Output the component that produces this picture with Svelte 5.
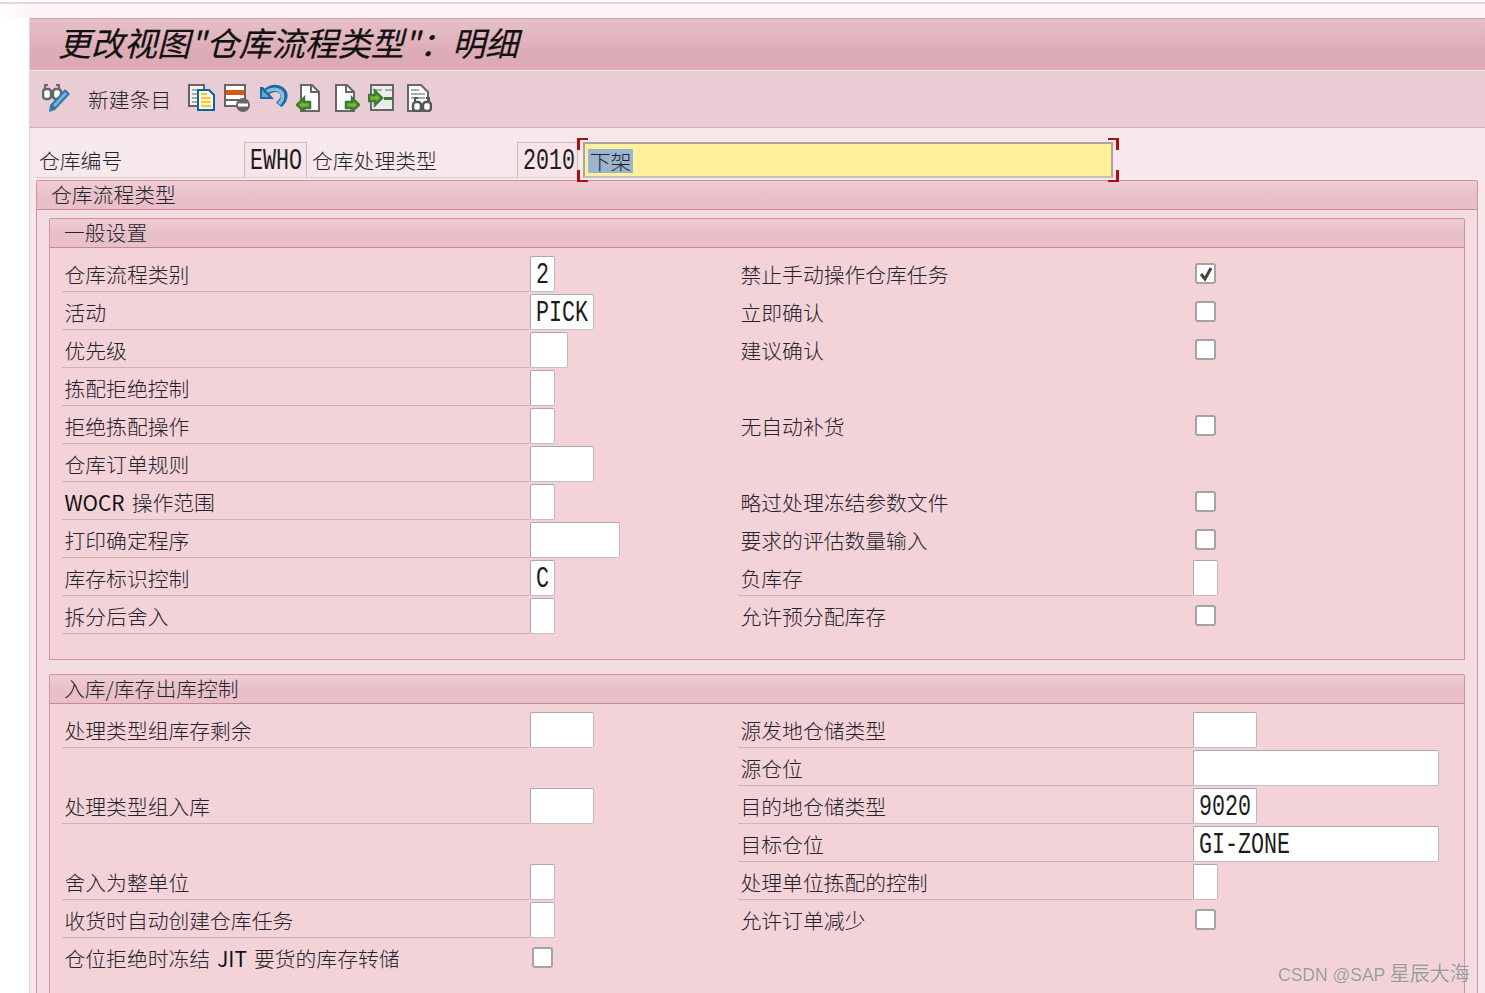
<script>
  // each row: [left, right], a cell is { t: label, w: field width, v: value } or { t, check } 
  const general = [
    [{ t: '仓库流程类别', w: 25, v: '2' }, { t: '禁止手动操作仓库任务', check: true, on: true }],
    [{ t: '活动', w: 64, v: 'PICK' }, { t: '立即确认', check: true }],
    [{ t: '优先级', w: 38 }, { t: '建议确认', check: true }],
    [{ t: '拣配拒绝控制', w: 25 }, null],
    [{ t: '拒绝拣配操作', w: 25 }, { t: '无自动补货', check: true }],
    [{ t: '仓库订单规则', w: 64 }, null],
    [{ t: 'WOCR 操作范围', w: 25 }, { t: '略过处理冻结参数文件', check: true }],
    [{ t: '打印确定程序', w: 90 }, { t: '要求的评估数量输入', check: true }],
    [{ t: '库存标识控制', w: 25, v: 'C' }, { t: '负库存', w: 25 }],
    [{ t: '拆分后舍入', w: 25 }, { t: '允许预分配库存', check: true }]
  ];

  const stock = [
    [{ t: '处理类型组库存剩余', w: 64 }, { t: '源发地仓储类型', w: 64 }],
    [null, { t: '源仓位', w: 246 }],
    [{ t: '处理类型组入库', w: 64 }, { t: '目的地仓储类型', w: 64, v: '9020' }],
    [null, { t: '目标仓位', w: 246, v: 'GI-ZONE' }],
    [{ t: '舍入为整单位', w: 25 }, { t: '处理单位拣配的控制', w: 25 }],
    [{ t: '收货时自动创建仓库任务', w: 25 }, { t: '允许订单减少', check: true }],
    [{ t: '仓位拒绝时冻结 JIT 要货的库存转储', check: true }, null]
  ];

  // latin words come out heavier than the chinese in the reference
  const parts = (text) => text.split(/([A-Z]+)/);
</script>

{#snippet cell(c)}
  <div class="cell">
    {#if c}
      <span class="label" class:plain={c.check}>
        {#each parts(c.t) as part, i}
          {#if i % 2}<span class="latin">{part}</span>{:else}{part}{/if}
        {/each}
      </span>
      {#if c.check}
        <span class="check">
          {#if c.on}
            <svg viewBox="0 0 16 16" width="16" height="16"><path d="M3 8l4 5 6-11" fill="none" stroke="#4d3f40" stroke-width="3" /></svg>
          {/if}
        </span>
      {:else}
        <span class="field" style="width:{c.w}px"><span class="mono">{c.v ?? ''}</span></span>
      {/if}
    {/if}
  </div>
{/snippet}

{#snippet group(title, rows)}
  <section class="group">
    <div class="group-head">{title}</div>
    <div class="rows">
      {#each rows as row}
        <div class="row">
          {@render cell(row[0])}
          {@render cell(row[1])}
        </div>
      {/each}
    </div>
  </section>
{/snippet}

<div class="page">
  <div class="topline"></div>
  <div class="topband"></div>
  <div class="shell">
    <div class="title">更改视图"仓库流程类型"：明细</div>

    <div class="toolbar">
      <svg class="icon" viewBox="0 0 28 28">
        <g fill="#fff" stroke="#666" stroke-width="2.500">
          <rect x="1" y="5" width="8" height="10" rx="3" />
          <rect x="11" y="5" width="8" height="10" rx="3" />
        </g>
        <path d="M3 5V1h3M17 5V1h-3M9 9h2" fill="none" stroke="#666" stroke-width="2" />
        <path d="M23 5l5 5-15 16-6 2 1-7z" fill="#2f78ab" />
        <path d="M23 8l2 2-12 13-2-2z" fill="#7fb2d4" />
      </svg>
      <span class="tool-text">新建条目</span>
      <div class="tools">
        <svg class="icon" viewBox="0 0 28 28">
          <rect x="1" y="1" width="15" height="21" fill="#f3f3f3" stroke="#666" stroke-width="2" />
          <path d="M4 6h9M4 10h6M4 14h6M4 18h6" stroke="#aaa" stroke-width="2" />
          <path d="M10 6h11l5 5v15H10z" fill="#fff" stroke="#0a6496" stroke-width="2" />
          <path d="M13 10h6M13 14h10M13 18h10M13 22h10" stroke="#f5c93c" stroke-width="2.400" />
        </svg>
        <svg class="icon" viewBox="0 0 28 28">
          <rect x="1" y="1" width="20" height="21" fill="#fff" stroke="#666" stroke-width="2" />
          <rect x="2" y="6" width="18" height="5" fill="#d4581a" />
          <path d="M2 16h18" stroke="#666" stroke-width="2" />
          <circle cx="19" cy="21" r="7" fill="#666" />
          <rect x="14" y="19.500" width="10" height="3" fill="#fff" />
        </svg>
        <svg class="icon" viewBox="0 0 28 28">
          <path d="M6 8Q14 2 21 6q5 4 2 10l-4 5" fill="none" stroke="#1a6ca0" stroke-width="7" />
          <path d="M6 8Q14 3 20 7q4 3 2 9l-3 4" fill="none" stroke="#8fbbd9" stroke-width="3.500" />
          <path d="M0 3h3l11 12H0z" fill="#1a6ca0" />
          <path d="M2 6l7 7H2z" fill="#6ea6cc" />
        </svg>
        <svg class="icon" viewBox="0 0 28 28">
          <path d="M5 1h11l7 7v19H5z" fill="#fff" stroke="#666" stroke-width="2" />
          <path d="M15 1v7h8" fill="none" stroke="#666" stroke-width="2" />
          <path d="M1 21l7-7v4h6v6H8v3z" fill="#7ab32d" stroke="#3d7a3a" stroke-width="2.500" />
        </svg>
        <svg class="icon" viewBox="0 0 28 28">
          <path d="M4 1h11l7 7v19H4z" fill="#fff" stroke="#666" stroke-width="2" />
          <path d="M14 1v7h8" fill="none" stroke="#666" stroke-width="2" />
          <path d="M27 21l-7-7v4h-6v6h6v3z" fill="#7ab32d" stroke="#3d7a3a" stroke-width="2.500" />
        </svg>
        <svg class="icon" viewBox="0 0 28 28">
          <rect x="3" y="1" width="22" height="25" fill="#ececec" stroke="#666" stroke-width="2" />
          <path d="M5 6h9M17 6h7" stroke="#aaa" stroke-width="2" />
          <rect x="16" y="13" width="9" height="3" fill="#3d7a3a" />
          <path d="M14 14l-7-7v4H1v6h6v4z" fill="#7ab32d" stroke="#3d7a3a" stroke-width="2.500" />
        </svg>
        <svg class="icon" viewBox="0 0 28 28">
          <path d="M4 1h13l7 7v19H4z" fill="#fff" stroke="#666" stroke-width="2" />
          <path d="M7 6h8M7 10h14M7 14h14" stroke="#aaa" stroke-width="2" />
          <g fill="#fff" stroke="#555" stroke-width="2.500">
            <rect x="9" y="18" width="8" height="9" rx="3" />
            <rect x="19" y="18" width="8" height="9" rx="3" />
          </g>
          <path d="M11 18v-4h3M25 18v-4h-3M17 22h2" fill="none" stroke="#555" stroke-width="2" />
        </svg>
      </div>
    </div>

    <div class="header-zone">
      <span class="hd-label first">仓库编号</span>
      <span class="readonly first-ro"><span class="mono">EWHO</span></span>
      <span class="hd-label second">仓库处理类型</span>
      <span class="readonly second-ro"><span class="mono">2010</span></span>
      <div class="focus">
        <span class="selected">下架</span>
        <i class="corner tl"></i><i class="corner tr"></i><i class="corner bl"></i><i class="corner br"></i>
      </div>
    </div>

    <section class="outer">
      <div class="outer-head">仓库流程类型</div>
      <div class="outer-body">
        {@render group('一般设置', general)}
        {@render group('入库/库存出库控制', stock)}
      </div>
    </section>
  </div>
  <div class="watermark">CSDN @SAP <span class="wm-cjk">星辰大海</span></div>
</div>

<style>
  :global(body) {
    margin: 0;
    background: #fff;
  }

  .page {
    position: relative;
    height: 993px;
    overflow: hidden;
    font-family: "Noto Sans CJK SC", "Liberation Sans", sans-serif;
    font-size: 20.8px;
    font-weight: 300;
    color: #24242c;
    background: #fff;
  }

  .topline {
    height: 2px;
    margin-top: 2px;
    background: #e8d6d9;
  }

  .topband {
    height: 14px;
    background: linear-gradient(90deg, #fff, #fdf4f5 30px);
  }

  .shell {
    margin-left: 29px;
    border-left: 1px solid #e6cfd3;
    background: #f6e8eb;
  }

  .title {
    height: 52px;
    box-sizing: border-box;
    padding-left: 28px;
    line-height: 46px;
    font-size: 33px;
    font-style: italic;
    font-weight: 400;
    color: #111;
    -webkit-text-stroke: 0.2px #111;
    background: linear-gradient(#e7c0c8, #dcabb5 70%);
    border-top: 1px solid #cfa0a9;
  }

  .toolbar {
    display: flex;
    align-items: center;
    height: 57px;
    box-sizing: border-box;
    margin-top: 1px;
    padding: 0 0 3px 12px;
    background: #e9ccd4;
    border-bottom: 1px solid #d2a8b1;
  }

  .icon {
    width: 28px;
    height: 28px;
    flex: none;
  }

  .tool-text {
    width: 82px;
    margin: 2px 18px 0;
    white-space: nowrap;
  }

  .tools {
    display: flex;
    gap: 8px;
  }

  .header-zone {
    display: flex;
    align-items: flex-start;
    height: 52px;
    box-sizing: border-box;
    padding: 14px 0 0 6px;
  }

  .hd-label {
    height: 36px;
    box-sizing: border-box;
    line-height: 37px;
    border-bottom: 1px solid #d8c8cb;
  }

  .hd-label.first {
    width: 208px;
    padding-left: 3px;
  }

  .hd-label.second {
    width: 210px;
    padding-left: 5px;
  }

  .readonly {
    display: flex;
    align-items: center;
    height: 36px;
    box-sizing: border-box;
    padding-left: 5px;
    background: #f7e4e8;
    border: 1px solid #c9bdbf;
    border-bottom-color: #e2d4d6;
  }

  .first-ro {
    width: 63px;
  }

  .second-ro {
    width: 61px;
  }

  .mono {
    display: inline-block;
    margin-top: 3px;
    font-family: "Liberation Mono", monospace;
    font-size: 21.67px;
    font-weight: 400;
    line-height: 30px;
    color: #1c1c1c;
    transform: scaleY(1.35);
  }

  .focus {
    position: relative;
    width: 530px;
    height: 36px;
    box-sizing: border-box;
    margin-left: 5px;
    padding: 5px 0 0 3px;
    background: #fff09c;
    border: 2px solid #a8a59a;
    border-bottom-color: #c4c2b0;
  }

  .selected {
    display: block;
    width: 45px;
    height: 24px;
    line-height: 24px;
    text-align: center;
    background: #9bb4cf;
  }

  .corner {
    position: absolute;
    width: 8px;
    height: 10px;
    border: 0 solid #b00d12;
  }

  .tl {
    top: -6px;
    left: -8px;
    border-width: 2px 0 0 3px;
  }

  .tr {
    top: -6px;
    right: -8px;
    border-width: 2px 3px 0 0;
  }

  .bl {
    bottom: -6px;
    left: -8px;
    border-width: 0 0 2px 3px;
  }

  .br {
    bottom: -6px;
    right: -8px;
    border-width: 0 3px 2px 0;
  }

  .outer {
    margin: 0 7px 0 6px;
    background: #f4dde2;
    border: 1px solid #d0919d;
    border-radius: 2px 2px 0 0;
  }

  .outer-head,
  .group-head {
    height: 29px;
    box-sizing: border-box;
    padding-left: 14px;
    line-height: 27px;
    background: linear-gradient(#efcdd4, #e9bfc8 55%);
    border-bottom: 1px solid #c98893;
  }

  .outer-body {
    display: flex;
    flex-direction: column;
    gap: 14px;
    padding: 8px 12px 0;
  }

  .group {
    background: #f3d2d8;
    border: 1px solid #d0919d;
    border-radius: 2px 2px 0 0;
  }

  .rows {
    padding: 8px 0 23px 12px;
  }

  .row {
    display: grid;
    grid-template-columns: 676px 1fr;
    height: 38px;
  }

  .cell {
    display: flex;
    align-items: flex-start;
  }

  .cell:first-child .label {
    width: 468px;
  }

  .cell:last-child .label {
    width: 455px;
  }

  .label {
    height: 36px;
    box-sizing: border-box;
    padding-left: 2.5px;
    line-height: 37px;
    word-spacing: 2.5px;
    white-space: nowrap;
    border-bottom: 1px solid #cdb4b9;
  }

  .label.plain {
    border-bottom-color: transparent;
  }

  .latin {
    font-weight: 400;
    color: #111;
  }

  .field {
    display: flex;
    align-items: center;
    height: 36px;
    box-sizing: border-box;
    padding-left: 5px;
    overflow: hidden;
    background: #fff;
    border: 1px solid #aaa;
    border-right-color: #bbb;
    border-bottom-color: #c0c0c0;
    border-radius: 2px;
  }

  .check {
    display: flex;
    align-items: center;
    justify-content: center;
    width: 21px;
    height: 21px;
    box-sizing: border-box;
    margin: 7px 0 0 2px;
    background: #fff;
    border: 2px solid #a3a3a3;
    border-radius: 3px;
  }

  .watermark {
    position: absolute;
    left: 1278px;
    top: 958px;
    font-family: "Liberation Sans", "Noto Sans CJK SC", sans-serif;
    font-size: 17.5px;
    font-weight: 400;
    color: rgba(110, 110, 110, 0.7);
    text-shadow: 0 0 1px #fff;
    white-space: nowrap;
  }

  .wm-cjk {
    font-family: "Noto Sans CJK SC", sans-serif;
    font-size: 20px;
  }
</style>
